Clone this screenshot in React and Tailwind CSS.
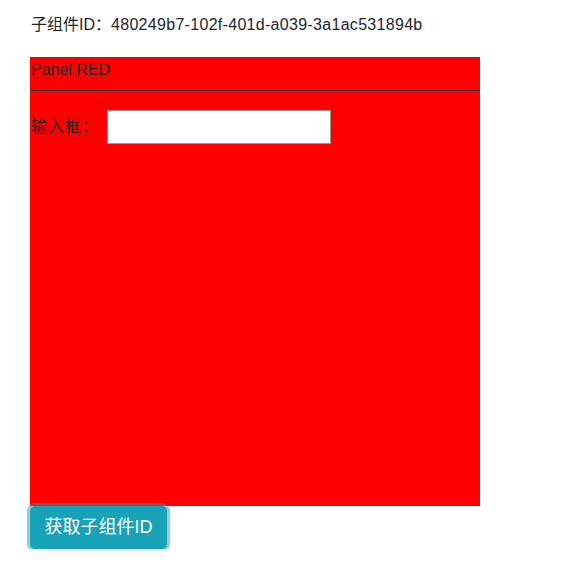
export default function App() {
  const childId = '480249b7-102f-401d-a039-3a1ac531894b';

  return (
    <div className="pl-[30px] pt-[13px] text-[16px] leading-[24px] text-[#212529] font-['Liberation_Sans','Noto_Sans_CJK_SC',sans-serif]">
      <div className="pl-px">
        子组件ID：<span className="tracking-[0.3px]">{childId}</span>
      </div>

      <div className="mt-[20px] w-[450px] h-[449px] bg-[#ff0000]">
        <div className="h-[34px] pt-[1px] pl-px border-b border-[#333]">Panel RED</div>
        <div className="flex items-center mt-[19px] pl-px">
          <span className="w-[76px] tracking-[1px]">输入框：</span>
          <input
            type="text"
            className="w-[224px] h-[34px] bg-white border border-[#999] outline-none"
          />
        </div>
      </div>

      <button className="relative w-[137px] h-[43px] rounded-[5px] bg-[#17a2b8] text-white text-[18px] leading-[27px] shadow-[0_0_0_3px_rgba(23,162,184,0.5)]">
        获取子组件ID
      </button>
    </div>
  );
}
